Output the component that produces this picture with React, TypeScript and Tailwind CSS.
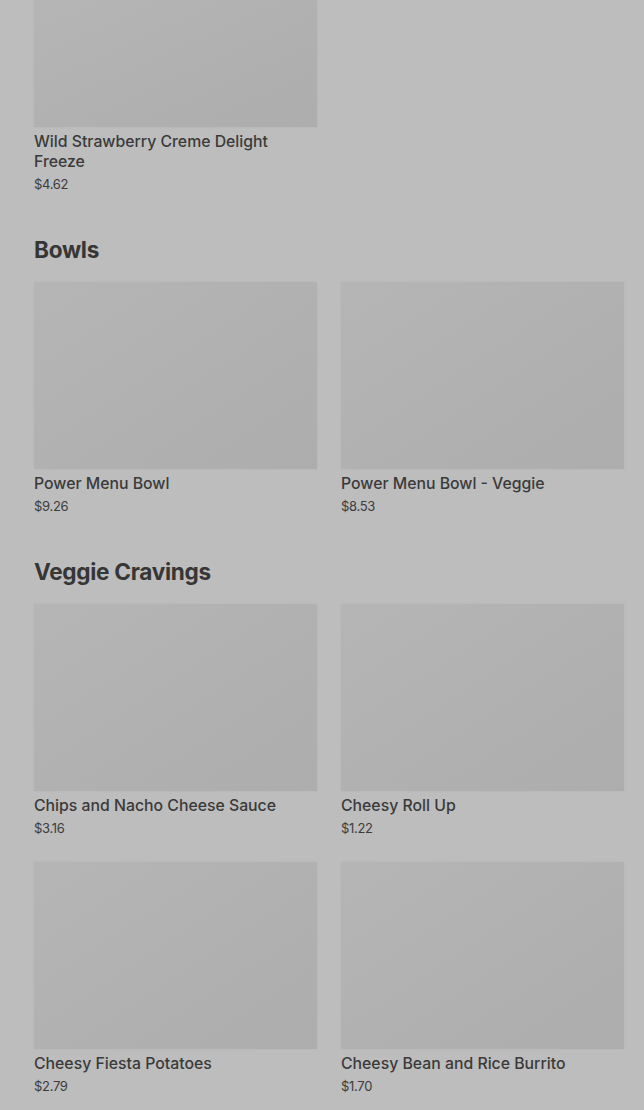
import React from "react";

type Item = { name: string; price: string };

const Card = ({ item, imgH = "h-[187px]" }: { item: Item; imgH?: string }) => (
  <div className="flex flex-col">
    <div className={`${imgH} w-full bg-gradient-to-br from-[#b5b5b5] to-[#adadad] shadow-[0_0_2px_rgba(0,0,0,0.06)]`} />
    <div className="pt-[5px] text-[15.8px] leading-[20px] font-medium text-[#3a3a3a]">{item.name}</div>
    <div className="pt-[3px] text-[13px] leading-[18px] text-[#3c3c3c] tracking-[-0.3px]">{item.price}</div>
  </div>
);

const Section = ({ title, items }: { title: string; items: Item[] }) => (
  <div className="flex flex-col">
    <h2 className="text-[22.6px] leading-[32px] font-bold text-[#363636] tracking-[-0.3px]">{title}</h2>
    <div className="mt-[16px] grid grid-cols-2 gap-x-[24px] gap-y-[25px]">
      {items.map((it) => (
        <Card key={it.name} item={it} />
      ))}
    </div>
  </div>
);

export default function App() {
  return (
    <div
      className="min-h-[1110px] w-[644px] overflow-hidden bg-[#bdbdbd] pl-[34px] pr-[20px]"
      style={{ fontFamily: "Inter, 'Noto Sans', sans-serif" }}
    >
      <div className="grid grid-cols-2 gap-x-[24px]">
        <Card item={{ name: "Wild Strawberry Creme Delight Freeze", price: "$4.62" }} imgH="h-[127px]" />
      </div>
      <div className="mt-[41px] flex flex-col gap-[41px]">
        <Section
          title="Bowls"
          items={[
            { name: "Power Menu Bowl", price: "$9.26" },
            { name: "Power Menu Bowl - Veggie", price: "$8.53" },
          ]}
        />
        <Section
          title="Veggie Cravings"
          items={[
            { name: "Chips and Nacho Cheese Sauce", price: "$3.16" },
            { name: "Cheesy Roll Up", price: "$1.22" },
            { name: "Cheesy Fiesta Potatoes", price: "$2.79" },
            { name: "Cheesy Bean and Rice Burrito", price: "$1.70" },
          ]}
        />
      </div>
    </div>
  );
}
